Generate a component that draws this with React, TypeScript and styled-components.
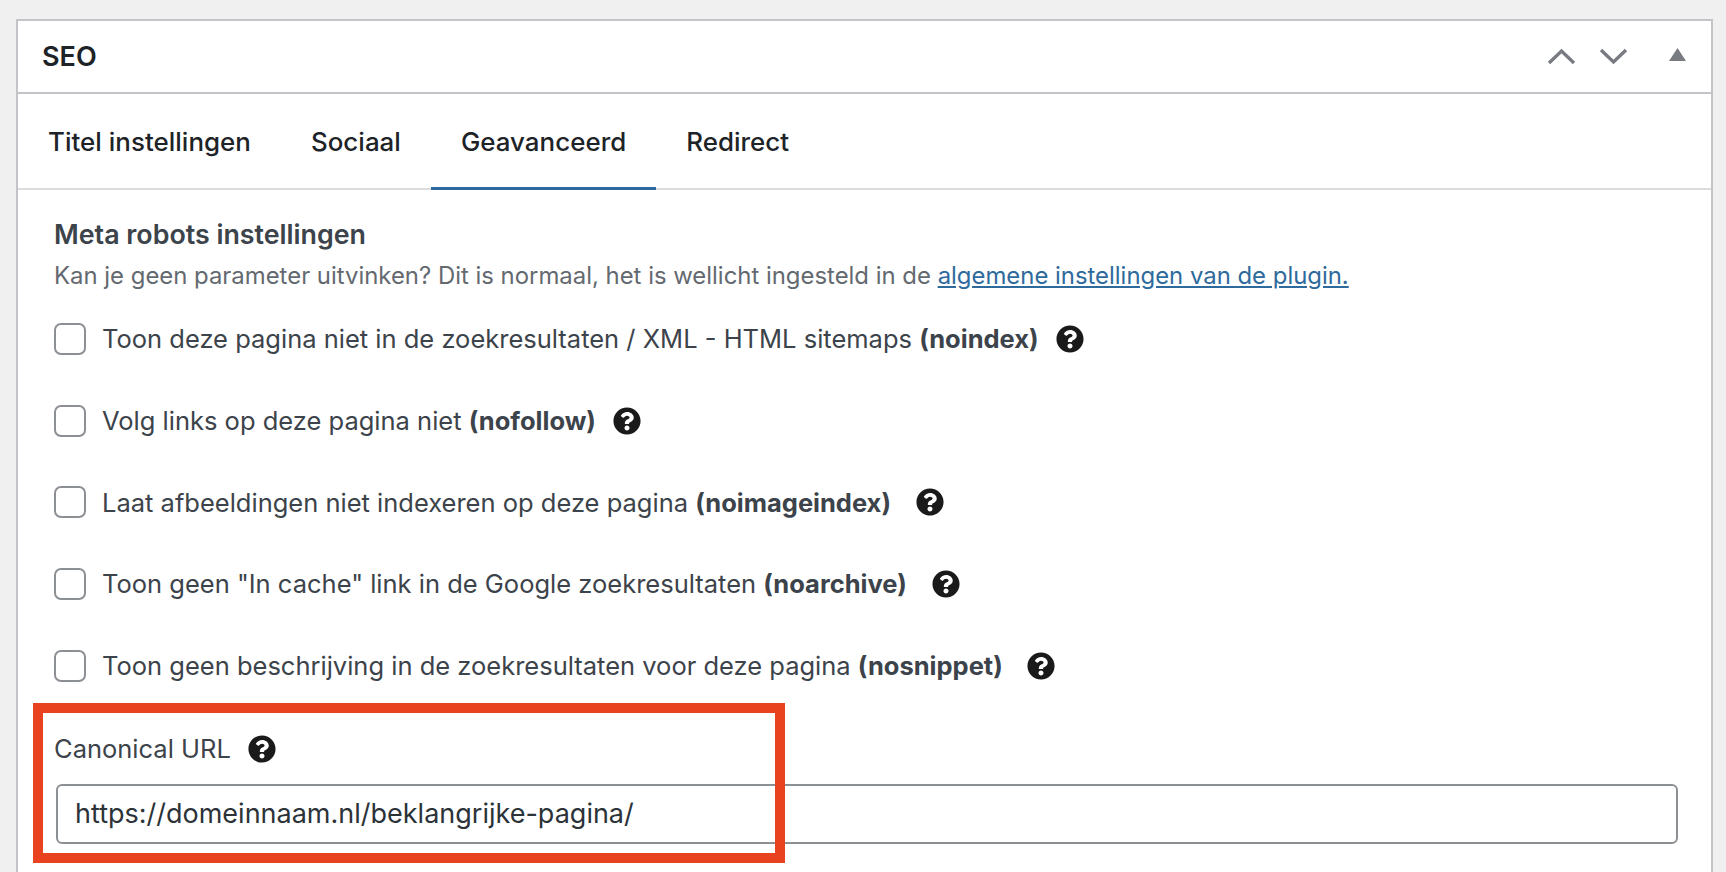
import styled, { createGlobalStyle } from 'styled-components'
import { FaQuestionCircle } from 'react-icons/fa'

const GlobalStyle = createGlobalStyle`
  html, body {
    margin: 0;
    height: 100%;
    overflow: hidden;
    background: #f0f0f1;
  }
  body {
    font-family: Inter, "Liberation Sans", sans-serif;
    color: #3c434a;
  }
`

const Page = styled.div`
  height: 872px;
  padding: 19px 13px 0 16px;
  box-sizing: border-box;
  overflow: hidden;
`

const Panel = styled.section`
  background: #fff;
  border: 2px solid #c3c4c7;
  border-bottom: 0;
  height: 900px;
`

const PanelHeader = styled.header`
  display: flex;
  align-items: center;
  justify-content: space-between;
  height: 71px;
  padding: 0 25px 0 24px;
  border-bottom: 2px solid #c3c4c7;
`

const PanelTitle = styled.h2`
  margin: 0;
  font-size: 27px;
  font-weight: 600;
  color: #1d2327;
`

const HeaderActions = styled.div`
  display: flex;
  align-items: center;
  color: #787c82;
`

const ChevronButton = styled.svg`
  display: block;
  width: 29px;
  height: 17px;
  margin-right: 23px;
`

const ToggleTriangle = styled.svg`
  display: block;
  width: 17px;
  height: 13px;
  margin-left: 18px;
  margin-bottom: 5px;
`

const TabBar = styled.nav`
  display: flex;
  height: 94px;
  border-bottom: 2px solid #dcdcde;
`

const Tab = styled.a<{ $active?: boolean }>`
  display: flex;
  align-items: center;
  height: 96px;
  box-sizing: border-box;
  padding: 2px 30px 0;
  font-size: 25.9px;
  letter-spacing: 0.03px;
  font-weight: 500;
  color: #1d2327;
  border-bottom: 3px solid ${p => (p.$active ? '#2c6aa0' : 'transparent')};
`

const Content = styled.div`
  position: relative;
  padding: 26px 36px 0 36px;
`

const SectionTitle = styled.h3`
  margin: 0;
  font-size: 26.8px;
  line-height: 36px;
  font-weight: 600;
  color: #3c434a;
`

const Description = styled.p`
  margin: 6px 0 0;
  font-size: 23.9px;
  line-height: 36px;
  color: #646970;
`

const DocLink = styled.a`
  color: #2f6a9c;
  text-decoration: underline;
`

const OptionList = styled.div`
  display: flex;
  flex-direction: column;
  margin-top: 4px;
`

const OptionRow = styled.label`
  display: flex;
  align-items: center;
  height: 81.7px;
  font-size: 25.5px;
  color: #3c434a;
`

const Checkbox = styled.input`
  appearance: none;
  flex: none;
  width: 32px;
  height: 32px;
  margin: 0 16px 0 0;
  background: #fff;
  border: 2px solid #8c8f94;
  border-radius: 7px;
`

const HelpIcon = styled(FaQuestionCircle)<{ $gap?: number }>`
  flex: none;
  width: 28px;
  height: 28px;
  margin-left: ${p => p.$gap ?? 17}px;
  color: #1a1a1a;
`

const FieldLabel = styled.div`
  display: flex;
  align-items: center;
  margin-top: 25px;
  font-size: 25.5px;
  line-height: 36px;
  color: #3c434a;
`

const UrlInput = styled.input`
  display: block;
  width: calc(100% + 1px);
  height: 60px;
  margin: 17px 0 0 2px;
  padding: 0 17px 2px;
  box-sizing: border-box;
  font-family: Inter, "Liberation Sans", sans-serif;
  font-size: 27px;
  color: #2c3338;
  background: #fff;
  border: 2px solid #8c8f94;
  border-radius: 6px;
  outline: 0;
`

const Highlight = styled.div`
  position: absolute;
  left: 15px;
  top: 513px;
  width: 752px;
  height: 160px;
  box-sizing: border-box;
  border: 10px solid #e8421f;
  pointer-events: none;
`

const options = [
  { label: 'Toon deze pagina niet in de zoekresultaten / XML - HTML sitemaps', code: '(noindex)', gap: 17 },
  { label: 'Volg links op deze pagina niet', code: '(nofollow)', gap: 17 },
  { label: 'Laat afbeeldingen niet indexeren op deze pagina', code: '(noimageindex)', gap: 25 },
  { label: 'Toon geen "In cache" link in de Google zoekresultaten', code: '(noarchive)', gap: 25 },
  { label: 'Toon geen beschrijving in de zoekresultaten voor deze pagina', code: '(nosnippet)', gap: 24 },
]

const tabs = ['Titel instellingen', 'Sociaal', 'Geavanceerd', 'Redirect']

export default function App() {
  return (
    <Page>
      <GlobalStyle />
      <Panel>
        <PanelHeader>
          <PanelTitle>SEO</PanelTitle>
          <HeaderActions>
            <ChevronButton viewBox="0 0 29 17" fill="none" stroke="currentColor" strokeWidth="3.4">
              <path d="M2 15 L14.5 3 L27 15" />
            </ChevronButton>
            <ChevronButton viewBox="0 0 29 17" fill="none" stroke="currentColor" strokeWidth="3.4">
              <path d="M2 2 L14.5 14 L27 2" />
            </ChevronButton>
            <ToggleTriangle viewBox="0 0 17 13" fill="currentColor">
              <path d="M8.5 0 L17 13 L0 13 Z" />
            </ToggleTriangle>
          </HeaderActions>
        </PanelHeader>
        <TabBar>
          {tabs.map(tab => (
            <Tab key={tab} $active={tab === 'Geavanceerd'}>{tab}</Tab>
          ))}
        </TabBar>
        <Content>
          <SectionTitle>Meta robots instellingen</SectionTitle>
          <Description>
            Kan je geen parameter uitvinken? Dit is normaal, het is wellicht ingesteld in de{' '}
            <DocLink>algemene instellingen van de plugin.</DocLink>
          </Description>
          <OptionList>
            {options.map(o => (
              <OptionRow key={o.code}>
                <Checkbox type="checkbox" />
                <span>
                  {o.label} <b>{o.code}</b>
                </span>
                <HelpIcon $gap={o.gap} />
              </OptionRow>
            ))}
          </OptionList>
          <FieldLabel>
            Canonical URL
            <HelpIcon />
          </FieldLabel>
          <UrlInput readOnly value="https://domeinnaam.nl/beklangrijke-pagina/" />
          <Highlight />
        </Content>
      </Panel>
    </Page>
  )
}
